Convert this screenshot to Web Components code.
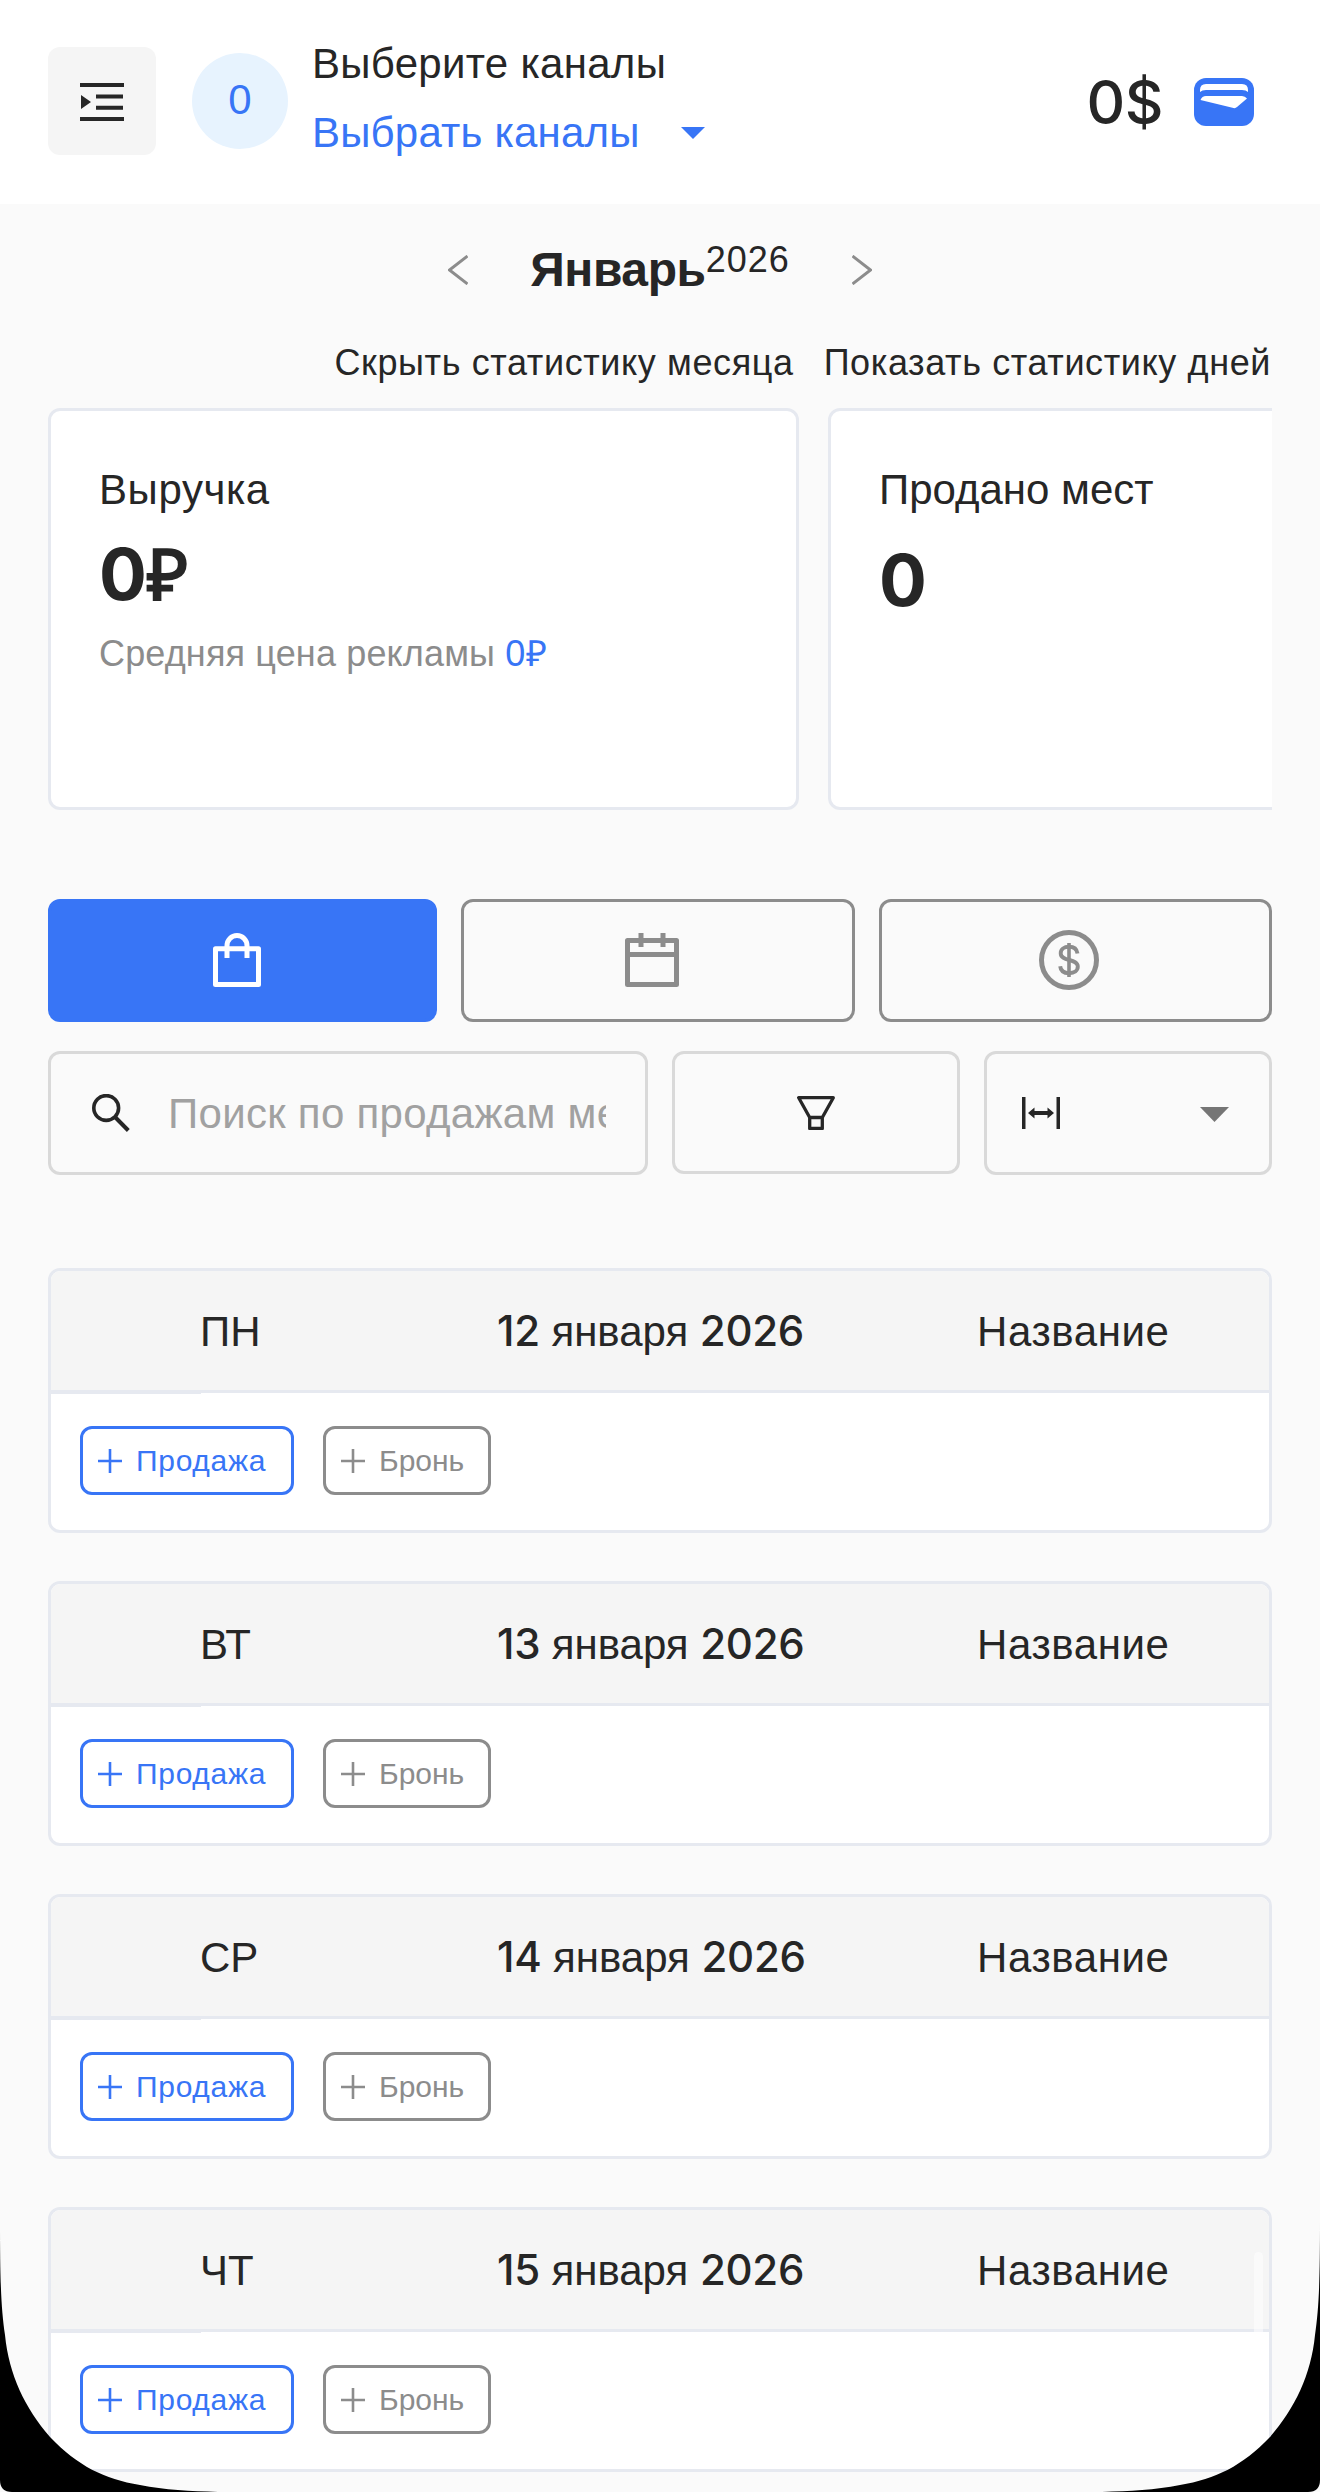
<!DOCTYPE html>
<html lang="ru">
<head>
<meta charset="utf-8">
<title>Январь 2026</title>
<style>
html {
  background: #fafafa;
}
body {
  margin: 0;
  width: 1320px;
  height: 2492px;
  position: relative;
  overflow: hidden;
  font: 42px/66px "Liberation Sans", Arial, sans-serif;
  color: #262626;
  --blue: #3875f6;
  --grey: #8c8c8c;
  --line: #e6e9f0;
}
main {
  padding: 0 48px;
}
.links {
  display: flex;
  justify-content: flex-end;
  gap: 30px;
  margin-top: 36px;
  padding-right: 1px;
  height: 72px;
  font-size: 36px;
  line-height: 54px;
  letter-spacing: .61px;
}
.stats {
  display: flex;
  gap: 29px;
  overflow: hidden;
}
stat-card b {
  font-weight: normal;
  letter-spacing: 1px;
  color: var(--blue);
}
stat-card i {
  font-family: "Liberation Sans", Arial, sans-serif;
  font-style: normal;
  line-height: 1;
}
.tabs {
  display: grid;
  grid-template-columns: 389px 394px 393px;
  gap: 24px;
  margin-top: 89px;
}
.filters {
  display: grid;
  grid-template-columns: 600px 288px 288px;
  gap: 24px;
  align-items: start;
  margin-top: 29px;
}
.days {
  display: flex;
  flex-direction: column;
  gap: 48px;
  margin-top: 93px;
}
</style>
</head>
<body>

<app-header channels="0" balance="0$">
  <span slot="title">Выберите каналы</span>
  <span slot="action">Выбрать каналы</span>
</app-header>

<main>
  <month-switcher year="2026">Январь</month-switcher>

  <div class="links">
    <text-link>Скрыть статистику месяца</text-link>
    <text-link>Показать статистику дней</text-link>
  </div>

  <div class="stats">
    <stat-card>
      <span slot="label" style="letter-spacing: .6px">Выручка</span>
      <span slot="value">0<i>₽</i></span>
      <span slot="note">Средняя цена рекламы <b>0₽</b></span>
    </stat-card>
    <stat-card plain>
      <span slot="label">Продано мест</span>
      <span slot="value">0</span>
    </stat-card>
  </div>

  <div class="tabs">
    <tab-button icon="bag" active></tab-button>
    <tab-button icon="calendar"></tab-button>
    <tab-button icon="dollar"></tab-button>
  </div>

  <div class="filters">
    <search-field>Поиск по продажам месяца</search-field>
    <filter-button></filter-button>
    <range-select></range-select>
  </div>

  <div class="days">
    <day-card day="ПН" date="12 января 2026"></day-card>
    <day-card day="ВТ" date="13 января 2026"></day-card>
    <day-card day="СР" date="14 января 2026"></day-card>
    <day-card day="ЧТ" date="15 января 2026"></day-card>
  </div>
</main>

<screen-corners></screen-corners>

<script>
// name: [width, height, markup]
const ICONS = {
  menu: [44, 38, `<path d="M0 0h44v4H0zM16 11.5h27v4H16zM16 22.7h27v4H16zM0 34h44v4H0zM1 12v14l10-7z" fill="currentColor"/>`],
  wallet: [60, 48, `<rect width="60" height="48" rx="12" fill="currentColor"/><path d="M6 14V12Q6 6 12 6H48Q54 6 54 12V14Q52 12 48 12H12Q8 12 6 14ZM6.500 22Q8 18 12 18H48Q51 18 53 20.500L43 29Q41.500 30.500 39.500 30Z" fill="#fff"/>`],
  caret: [24, 12, `<path d="M0 0h24L12 12z" fill="currentColor"/>`],
  prev: [20, 30, `<path d="M19.500 1L1.500 15l18 14" fill="none" stroke="currentColor" stroke-width="2.900"/>`],
  next: [20, 30, `<path d="M.5 1l18 14-18 14" fill="none" stroke="currentColor" stroke-width="2.900"/>`],
  bag: [48, 54, `<g fill="none" stroke="currentColor" stroke-width="5" stroke-linejoin="round"><path d="M2.500 15.700h43v35.800h-43z"/><path d="M14 25V12.500a10 10 0 0 1 20 0V25"/></g>`],
  calendar: [54, 54, `<g fill="none" stroke="currentColor" stroke-width="5" stroke-linejoin="round"><path d="M2.500 7.500h49v44h-49zM2.500 21.500h49M16 0v14M38 0v14"/></g>`],
  dollar: [60, 60, `<g fill="none" stroke="currentColor"><circle cx="30" cy="30" r="27.500" stroke-width="5"/><path d="M30 13v34" stroke-width="3.600"/><path d="M38.500 23.500c-.6-4.200-3.700-6.700-8.500-6.700-4.900 0-8.300 2.500-8.300 6.400 0 9 17.100 4.600 17.100 13.400 0 4.100-3.500 6.600-8.700 6.600-5.100 0-8.500-2.500-8.900-6.900" stroke-width="3.900"/></g>`],
  search: [38, 38, `<g fill="none" stroke="currentColor" stroke-width="3.600"><circle cx="14.200" cy="14" r="12.400"/><path d="M23 23l13.300 13.500" stroke-width="4"/></g>`],
  funnel: [38, 34, `<g fill="none" stroke="currentColor" stroke-width="3.300" stroke-linejoin="round"><path d="M1.700 1.700h34.600L25.300 21.500H12.700zM12.700 21.500h12.600v11H12.700z"/></g>`],
  range: [38, 32, `<path d="M0 0h3.500v32H0zM34.500 0H38v32h-3.500zM6 16l6.500-5.500V14h13v-3.500L32 16l-6.500 5.500V18h-13v3.500z" fill="currentColor"/>`],
  select: [29, 15, `<path d="M0 0h29L14.500 15z" fill="currentColor"/>`],
  plus: [24, 24, `<path d="M12 0v24M0 12h24" fill="none" stroke="currentColor" stroke-width="2.600"/>`]
};

function icon(name) {
  const [w, h, body] = ICONS[name];
  return `<svg class="${name}" width="${w}" height="${h}" viewBox="0 0 ${w} ${h}">${body}</svg>`;
}

// shared base: each element only supplies its render()
class BaseElement extends HTMLElement {
  constructor() {
    super();
    this._root = this.attachShadow({mode: 'open'});
  }

  connectedCallback() {
    this._root.innerHTML = `<style>svg { display: block; flex: none; }</style>` + this.render();
  }
}

class AppHeader extends BaseElement {
  render() {
    return `
<style>
:host {
  display: flex;
  align-items: flex-start;
  box-sizing: border-box;
  height: 204px;
  padding: 47px 66px 0 48px;
  background: #fff;
}
.toggle {
  display: flex;
  align-items: center;
  justify-content: center;
  box-sizing: border-box;
  width: 108px;
  height: 108px;
  padding-top: 2px;
  border-radius: 12px;
  background: #f5f5f5;
}
.count {
  width: 96px;
  height: 96px;
  margin: 6px 24px 0 36px;
  border-radius: 50%;
  background: #e7f3fe;
  color: var(--blue);
  line-height: 93px;
  text-align: center;
}
.channels {
  margin-top: -18px;
  line-height: 69px;
  letter-spacing: .3px;
}
.action {
  display: flex;
  align-items: center;
  gap: 41px;
  color: var(--blue);
  letter-spacing: .2px;
}
.balance {
  display: flex;
  align-items: center;
  gap: 31px;
  height: 110px;
  margin-left: auto;
  font-family: Inter, sans-serif;
  font-size: 60px;
  font-weight: 500;
  letter-spacing: -.5px;
}
.wallet {
  color: var(--blue);
}
</style>
<div class="toggle">${icon('menu')}</div>
<div class="count">${this.getAttribute('channels')}</div>
<div class="channels">
  <div><slot name="title"></slot></div>
  <div class="action"><slot name="action"></slot>${icon('caret')}</div>
</div>
<div class="balance"><span>${this.getAttribute('balance')}</span>${icon('wallet')}</div>
`;
  }
}

class MonthSwitcher extends BaseElement {
  render() {
    return `
<style>
:host {
  display: flex;
  justify-content: center;
  align-items: center;
  height: 60px;
  padding-top: 36px;
}
svg {
  color: var(--grey);
}
.month {
  display: flex;
  margin: 0 62px;
  font-size: 48px;
  font-weight: bold;
  line-height: 62px;
  letter-spacing: -.4px;
}
.year {
  margin-top: -10px;
  font-size: 36px;
  font-weight: normal;
  letter-spacing: 1px;
}
</style>
${icon('prev')}
<div class="month"><slot></slot><span class="year">${this.getAttribute('year')}</span></div>
${icon('next')}
`;
  }
}

class TextLink extends BaseElement {
  render() {
    return `<style>:host { display: block; white-space: nowrap; }</style><slot></slot>`;
  }
}

class StatCard extends BaseElement {
  render() {
    return `
<style>
:host {
  display: block;
  flex: none;
  box-sizing: border-box;
  width: 751px;
  height: 402px;
  padding: 46px 48px;
  border: 3px solid var(--line);
  border-radius: 12px;
  background: #fff;
}
.value {
  height: 84px;
  margin-top: 9px;
  font-family: Inter, sans-serif;
  font-size: 71px;
  font-weight: bold;
  line-height: 84px;
}
:host([plain]) .value {
  margin-top: 15px;
}
.note {
  margin-top: 11px;
  font-size: 36px;
  line-height: 54px;
  letter-spacing: .15px;
  color: var(--grey);
}
</style>
<div><slot name="label"></slot></div>
<div class="value"><slot name="value"></slot></div>
<div class="note"><slot name="note"></slot></div>
`;
  }
}

class TabButton extends BaseElement {
  render() {
    return `
<style>
:host {
  display: flex;
  align-items: center;
  justify-content: center;
  box-sizing: border-box;
  height: 123px;
  padding: 0 13px 1px 0;
  border: 3px solid var(--grey);
  border-radius: 12px;
  color: var(--grey);
}
:host([active]) {
  padding-right: 11px;
  border-color: var(--blue);
  background: var(--blue);
  color: #fff;
}
</style>
${icon(this.getAttribute('icon'))}
`;
  }
}

class SearchField extends BaseElement {
  render() {
    return `
<style>
:host {
  display: flex;
  align-items: center;
  box-sizing: border-box;
  height: 124px;
  padding: 0 39px 0 41px;
  border: 3px solid #d9d9d9;
  border-radius: 12px;
}
.placeholder {
  flex: 1;
  margin-left: 38px;
  padding-top: 2px;
  overflow: hidden;
  white-space: nowrap;
  letter-spacing: .3px;
  color: #a1a1a1;
}
</style>
${icon('search')}
<div class="placeholder"><slot></slot></div>
`;
  }
}

class FilterButton extends BaseElement {
  render() {
    return `
<style>
:host {
  display: flex;
  align-items: center;
  justify-content: center;
  box-sizing: border-box;
  height: 123px;
  border: 3px solid #d9d9d9;
  border-radius: 12px;
}
</style>
${icon('funnel')}
`;
  }
}

class RangeSelect extends BaseElement {
  render() {
    return `
<style>
:host {
  display: flex;
  align-items: center;
  justify-content: space-between;
  box-sizing: border-box;
  height: 124px;
  padding: 0 40px 0 35px;
  border: 3px solid #d9d9d9;
  border-radius: 12px;
}
.select {
  color: #757575;
  margin-top: 3px;
}
</style>
${icon('range')}
${icon('select')}
`;
  }
}

class AddButton extends BaseElement {
  render() {
    return `
<style>
:host {
  display: flex;
  align-items: center;
  gap: 14px;
  box-sizing: border-box;
  height: 69px;
  padding: 0 15px;
  border: 3px solid;
  border-radius: 12px;
  font-size: 30px;
  line-height: 63px;
  color: var(--grey);
}
:host([primary]) {
  letter-spacing: .7px;
  color: var(--blue);
}
</style>
${icon('plus')}
<span><slot></slot></span>
`;
  }
}

class DayCard extends BaseElement {
  render() {
    const [num, month, year] = this.getAttribute('date').split(' ');
    return `
<style>
:host {
  display: block;
  flex: none;
  box-sizing: border-box;
  height: 265px;
  border: 3px solid var(--line);
  border-radius: 12px;
  background: #fff;
  overflow: hidden;
}
.head {
  display: grid;
  grid-template-columns: 297px 480px auto;
  padding-left: 149px;
  height: 119px;
  line-height: 121px;
  background: #f5f5f5;
  border-bottom: 3px solid var(--line);
}
.name {
  letter-spacing: .6px;
}
b {
  font-family: Inter, sans-serif;
  font-weight: 500;
  line-height: 1;
  letter-spacing: -.3px;
}
.progress {
  width: 150px;
  height: 1px;
  background: var(--line);
}
.actions {
  display: flex;
  gap: 29px;
  padding: 32px 29px;
}
.sale {
  width: 214px;
}
.book {
  width: 168px;
}
</style>
<div class="head">
  <span>${this.getAttribute('day')}</span>
  <span><b>${num}</b> ${month} <b>${year}</b></span>
  <span class="name">Название</span>
</div>
<div class="progress"></div>
<div class="actions">
  <add-button class="sale" primary>Продажа</add-button>
  <add-button class="book">Бронь</add-button>
</div>
`;
  }
}

// rounded display edges and the scroll thumb, drawn over the page
class ScreenCorners extends BaseElement {
  render() {
    const corner = 'M0 0C0 60 1 88 5 115C9 155 25 188 50 217C78 246 104 259 140 265C165 270 190 271 218 272H12Q0 272 0 260Z';
    return `
<style>
:host {
  position: absolute;
  left: 0;
  bottom: 0;
  display: flex;
  justify-content: space-between;
  width: 1320px;
  height: 272px;
}
.right {
  transform: scaleX(-1);
}
.thumb {
  position: absolute;
  top: 32px;
  right: 57px;
  width: 9px;
  height: 200px;
  border-radius: 5px;
  background: rgba(255, 255, 255, .5);
}
</style>
<svg width="218" height="272"><path d="${corner}"/></svg>
<div class="thumb"></div>
<svg class="right" width="218" height="272"><path d="${corner}"/></svg>
`;
  }
}

window.customElements.define('app-header', AppHeader);
window.customElements.define('month-switcher', MonthSwitcher);
window.customElements.define('text-link', TextLink);
window.customElements.define('stat-card', StatCard);
window.customElements.define('tab-button', TabButton);
window.customElements.define('search-field', SearchField);
window.customElements.define('filter-button', FilterButton);
window.customElements.define('range-select', RangeSelect);
window.customElements.define('add-button', AddButton);
window.customElements.define('day-card', DayCard);
window.customElements.define('screen-corners', ScreenCorners);
</script>
</body>
</html>
